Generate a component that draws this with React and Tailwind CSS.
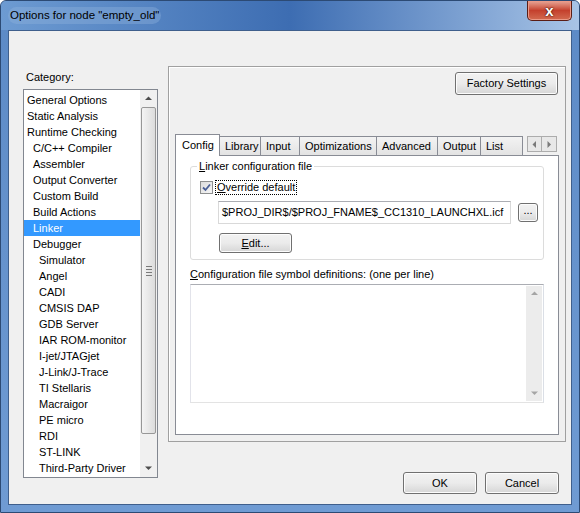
import React from 'react';

const CATEGORIES = [
  ['General Options', 0],
  ['Static Analysis', 0],
  ['Runtime Checking', 0],
  ['C/C++ Compiler', 1],
  ['Assembler', 1],
  ['Output Converter', 1],
  ['Custom Build', 1],
  ['Build Actions', 1],
  ['Linker', 1],
  ['Debugger', 1],
  ['Simulator', 2],
  ['Angel', 2],
  ['CADI', 2],
  ['CMSIS DAP', 2],
  ['GDB Server', 2],
  ['IAR ROM-monitor', 2],
  ['I-jet/JTAGjet', 2],
  ['J-Link/J-Trace', 2],
  ['TI Stellaris', 2],
  ['Macraigor', 2],
  ['PE micro', 2],
  ['RDI', 2],
  ['ST-LINK', 2],
  ['Third-Party Driver', 2],
];

const TABS = [
  ['Config', 45],
  ['Library', 41],
  ['Input', 39],
  ['Optimizations', 77],
  ['Advanced', 61],
  ['Output', 43],
  ['List', 42],
];

const INDENT = ['pl-[3px]', 'pl-[9px]', 'pl-[15px]'];

function WinButton({ children, className = '' }) {
  return (
    <div
      className={`flex items-center justify-center rounded-[3px] border border-[#707070] bg-gradient-to-b from-[#f2f2f2] via-[#ebebeb] to-[#d6d6d6] text-[11px] text-black shadow-[inset_0_0_0_1px_#fcfcfc] ${className}`}
    >
      {children}
    </div>
  );
}

function Arrow({ dir, color = '#4d4d4d' }) {
  const pts = {
    up: '0,4 3.5,0.5 7,4',
    down: '0,0.5 3.5,4 7,0.5',
    left: '4,0 0.5,3.5 4,7',
    right: '0.5,0 4,3.5 0.5,7',
  }[dir];
  const vert = dir === 'up' || dir === 'down';
  return (
    <svg width={vert ? 7 : 5} height={vert ? 5 : 7} viewBox={vert ? '0 0 7 5' : '0 0 5 7'}>
      <polygon points={pts} fill={color} />
    </svg>
  );
}

export default function App() {
  return (
    <div
      className="flex h-[513px] w-[580px] flex-col overflow-hidden rounded-t-[6px] border border-[#2c4a74] bg-gradient-to-b from-[#5c8ac6] to-[#6f9bd3]"
      style={{ fontFamily: '"Liberation Sans", Arial, sans-serif' }}
    >
      {/* title bar */}
      <div className="relative flex h-[29px] shrink-0 items-center bg-gradient-to-r from-[#6d9bd2] via-[#3d6db2] to-[#a8c4e6] pl-[7px]">
        <div className="rounded-[10px] bg-[#8fb2dc]/40 px-[2px] text-[11.5px] text-black">Options for node "empty_old"</div>
        <div className="absolute right-[7px] top-0 flex h-[20px] w-[45px] items-center justify-center rounded-b-[5px] border border-t-0 border-[#5a1d15] bg-gradient-to-b from-[#e6a597] via-[#c4402d] to-[#d36a50] shadow-[inset_0_0_0_1px_#eb9a88]">
          <span className="text-[15px] font-bold leading-none text-white" style={{ textShadow: '0 0 2px #3a0f08, 0 0 1px #3a0f08' }}>
            x
          </span>
        </div>
      </div>

      {/* client area */}
      <div className="mx-[7px] mb-[7px] flex flex-1 border border-[#3f5f8c] bg-[#f0f0f0]">
        {/* left column */}
        <div className="ml-[14px] flex flex-col pt-[39px]">
          <div className="h-[14px] pl-[3px] text-[11px] leading-[14px] text-black">Category:</div>
          <div className="mt-[5px] flex h-[389px] w-[135px] border border-[#828790] bg-white">
            <div className="flex flex-1 flex-col pt-[2px]">
              {CATEGORIES.map(([name, lvl]) => (
                <div
                  key={name}
                  className={`h-[16px] whitespace-nowrap text-[11px] leading-[16px] ${INDENT[lvl]} ${
                    name === 'Linker' ? 'bg-[#3399ff] text-white' : 'text-black'
                  }`}
                >
                  {name}
                </div>
              ))}
            </div>
            {/* scrollbar */}
            <div className="flex w-[17px] flex-col bg-[#f0f0f0]">
              <div className="flex h-[17px] items-center justify-center">
                <Arrow dir="up" />
              </div>
              <div className="mx-[1px] flex h-[327px] items-center justify-center rounded-[2px] border border-[#979797] bg-gradient-to-r from-[#f4f4f4] to-[#dcdcdc]">
                <div className="flex flex-col gap-[2px]">
                  <div className="h-px w-[6px] bg-[#7a7a7a]" />
                  <div className="h-px w-[6px] bg-[#7a7a7a]" />
                  <div className="h-px w-[6px] bg-[#7a7a7a]" />
                  <div className="h-px w-[6px] bg-[#7a7a7a]" />
                </div>
              </div>
              <div className="flex-1" />
              <div className="flex h-[17px] items-center justify-center">
                <Arrow dir="down" />
              </div>
            </div>
          </div>
        </div>

        {/* right column */}
        <div className="ml-[10px] flex flex-col pt-[35px]">
          <div className="flex h-[376px] w-[398px] flex-col border border-[#a0a0a0] bg-[#f0f0f0] shadow-[inset_1px_1px_0_#ffffff]">
            <div className="flex justify-end pr-[7px] pt-[5px]">
              <WinButton className="h-[23px] w-[103px]">Factory Settings</WinButton>
            </div>

            {/* tabs */}
            <div className="ml-[6px] mt-[39px] flex h-[21px] items-end">
              {TABS.map(([t, w], i) => (
                <div
                  key={t}
                  style={{ width: w }}
                  className={
                    i === 0
                      ? 'relative z-10 -mb-px flex h-[22px] items-center border border-b-0 border-[#898c95] bg-white pl-[6px] text-[11px] text-black'
                      : 'flex h-[19px] items-center border border-b-0 border-l-0 border-[#898c95] bg-gradient-to-b from-[#f3f3f3] to-[#e3e3e3] pl-[5px] text-[11px] text-black'
                  }
                >
                  {t}
                </div>
              ))}
              <div className="ml-auto mr-[8px] flex h-[17px] self-center pb-0">
                <div className="flex h-[16px] w-[15px] items-center justify-center border border-[#acacac] bg-[#e8e8e8]">
                  <Arrow dir="left" color="#7a7a7a" />
                </div>
                <div className="flex h-[16px] w-[15px] items-center justify-center border border-l-0 border-[#acacac] bg-[#e8e8e8]">
                  <Arrow dir="right" color="#7a7a7a" />
                </div>
              </div>
            </div>

            {/* tab page */}
            <div className="mx-[6px] flex h-[280px] flex-col border border-[#898c95] bg-white px-[14px]">
              {/* group box */}
              <div className="relative mt-[10px] h-[94px] rounded-[3px] border border-[#dcdcdc]">
                <div className="absolute left-[6px] top-[-8px] bg-white px-[2px] text-[11px] leading-[14px] text-black">
                  <span className="underline">L</span>inker configuration file
                </div>
                <div className="ml-[9px] mt-[13px] flex items-center">
                  <div className="flex h-[13px] w-[13px] items-center justify-center border border-[#8e8f8f] bg-gradient-to-br from-[#dcdcdc] to-[#f6f6f6]">
                    <svg width="9" height="9" viewBox="0 0 9 9">
                      <path d="M1 4.5 L3.5 7 L8 1.5" stroke="#4a5f97" strokeWidth="1.8" fill="none" />
                    </svg>
                  </div>
                  <div className="ml-[2px] border border-dotted border-black px-[1px] text-[11px] leading-[13px] text-black">
                    <span className="underline">O</span>verride default
                  </div>
                </div>
                <div className="ml-[27px] mt-[6px] flex items-center">
                  <div className="flex h-[23px] w-[293px] items-center border border-[#d9d9d9] border-t-[#abadb3] pl-[3px] text-[11px] text-black">
                    $PROJ_DIR$/$PROJ_FNAME$_CC1310_LAUNCHXL.icf
                  </div>
                  <WinButton className="ml-[7px] h-[19px] w-[20px] pb-[4px] text-[10px]">...</WinButton>
                </div>
                <WinButton className="ml-[28px] mt-[9px] h-[20px] w-[73px]">
                  <span>
                    <span className="underline">E</span>dit...
                  </span>
                </WinButton>
              </div>

              <div className="mt-[7px] text-[11px] leading-[14px] text-black">
                <span className="underline">C</span>onfiguration file symbol definitions: (one per line)
              </div>
              <div className="mt-[3px] flex h-[119px] border border-[#abadb3] border-b-[#e3e3e3] border-l-[#e2e3ea] border-r-[#dbdfe6] bg-white">
                <div className="flex-1" />
                <div className="m-[1px] flex w-[16px] flex-col justify-between bg-[#ececec] py-[5px]">
                  <div className="flex justify-center">
                    <Arrow dir="up" color="#a5a5a5" />
                  </div>
                  <div className="flex justify-center">
                    <Arrow dir="down" color="#a5a5a5" />
                  </div>
                </div>
              </div>
            </div>
          </div>

          {/* OK / Cancel */}
          <div className="mt-[30px] flex justify-end gap-[8px] pr-[7px]">
            <WinButton className="h-[22px] w-[74px]">OK</WinButton>
            <WinButton className="h-[22px] w-[74px]">Cancel</WinButton>
          </div>
        </div>
      </div>
    </div>
  );
}
